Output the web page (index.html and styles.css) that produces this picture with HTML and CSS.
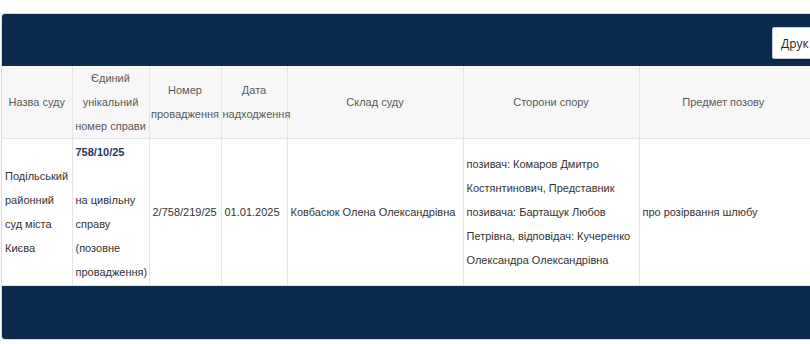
FILE: index.html
```html
<!DOCTYPE html>
<html lang="uk">
<head>
<meta charset="utf-8">
<title>Розклад засідань</title>
<link rel="stylesheet" href="styles.css">
</head>
<body>
<div class="panel">
  <div class="panel-top">
    <button class="btn-print" type="button">Друк</button>
  </div>
  <table class="cases">
    <colgroup>
      <col class="c-court">
      <col class="c-num">
      <col class="c-proc">
      <col class="c-date">
      <col class="c-judges">
      <col class="c-sides">
      <col class="c-subject">
    </colgroup>
    <thead>
      <tr>
        <th>Назва суду</th>
        <th>Єдиний унікальний номер справи</th>
        <th>Номер провадження</th>
        <th>Дата надходження</th>
        <th>Склад суду</th>
        <th>Сторони спору</th>
        <th class="subject">Предмет позову</th>
      </tr>
    </thead>
    <tbody>
      <tr>
        <td>Подільський районний суд міста Києва</td>
        <td class="top"><a class="case-link" href="#">758/10/25</a><br><br>на цивільну справу (позовне провадження)</td>
        <td>2/758/219/25</td>
        <td>01.01.2025</td>
        <td>Ковбасюк Олена Олександрівна</td>
        <td>позивач: Комаров Дмитро Костянтинович, Представник позивача: Бартащук Любов Петрівна, відповідач: Кучеренко Олександра Олександрівна</td>
        <td>про розірвання шлюбу</td>
      </tr>
    </tbody>
  </table>
  <div class="panel-bottom"></div>
</div>
</body>
</html>
```

FILE: styles.css
```css
html, body {
  margin: 0;
  padding: 0;
  background: #ffffff;
  overflow: hidden;
}

body {
  padding: 13px 0 0 1px;
  font-family: "Liberation Sans", Arial, sans-serif;
  font-size: 11px;
  color: #333333;
}

.panel {
  width: 900px;
  border: 1px solid #d3d9e0;
  border-radius: 4px;
  overflow: hidden;
  background: #ffffff;
}

.panel-top {
  height: 52px;
  background: #0b2a4d;
  display: flex;
  align-items: flex-end;
  padding-left: 770px;
  padding-bottom: 7px;
  box-sizing: border-box;
}

.btn-print {
  height: 32px;
  padding: 0 8px;
  background: #ffffff;
  border: 1px solid #c9ced4;
  border-radius: 2px;
  font-family: "Open Sans", "Liberation Sans", sans-serif;
  font-size: 12px;
  color: #222222;
  box-shadow: 0 1px 2px rgba(0, 0, 0, 0.25);
}

.cases {
  width: 900px;
  table-layout: fixed;
  border-collapse: collapse;
}

.c-court { width: 70px; }
.c-num { width: 77px; }
.c-proc { width: 72px; }
.c-date { width: 66px; }
.c-judges { width: 176px; }
.c-sides { width: 176px; }

.cases th,
.cases td {
  border: 1px solid #e4e4e4;
  line-height: 24px;
  vertical-align: middle;
}

.cases tr > :first-child {
  border-left: none;
}

.cases thead tr > * {
  border-top: none;
}

.cases th {
  background: #f7f7f7;
  font-weight: normal;
  color: #5a5a5a;
  text-align: center;
  padding: 0 1px;
  height: 72px;
}

.cases th.subject {
  padding-right: 95px;
}

.cases td {
  padding: 1px 3px;
  text-align: left;
}

.cases td.top {
  vertical-align: top;
}

.case-link {
  color: #233a5d;
  font-weight: bold;
  text-decoration: none;
}

.panel-bottom {
  height: 53px;
  background: #0b2a4d;
}
```
